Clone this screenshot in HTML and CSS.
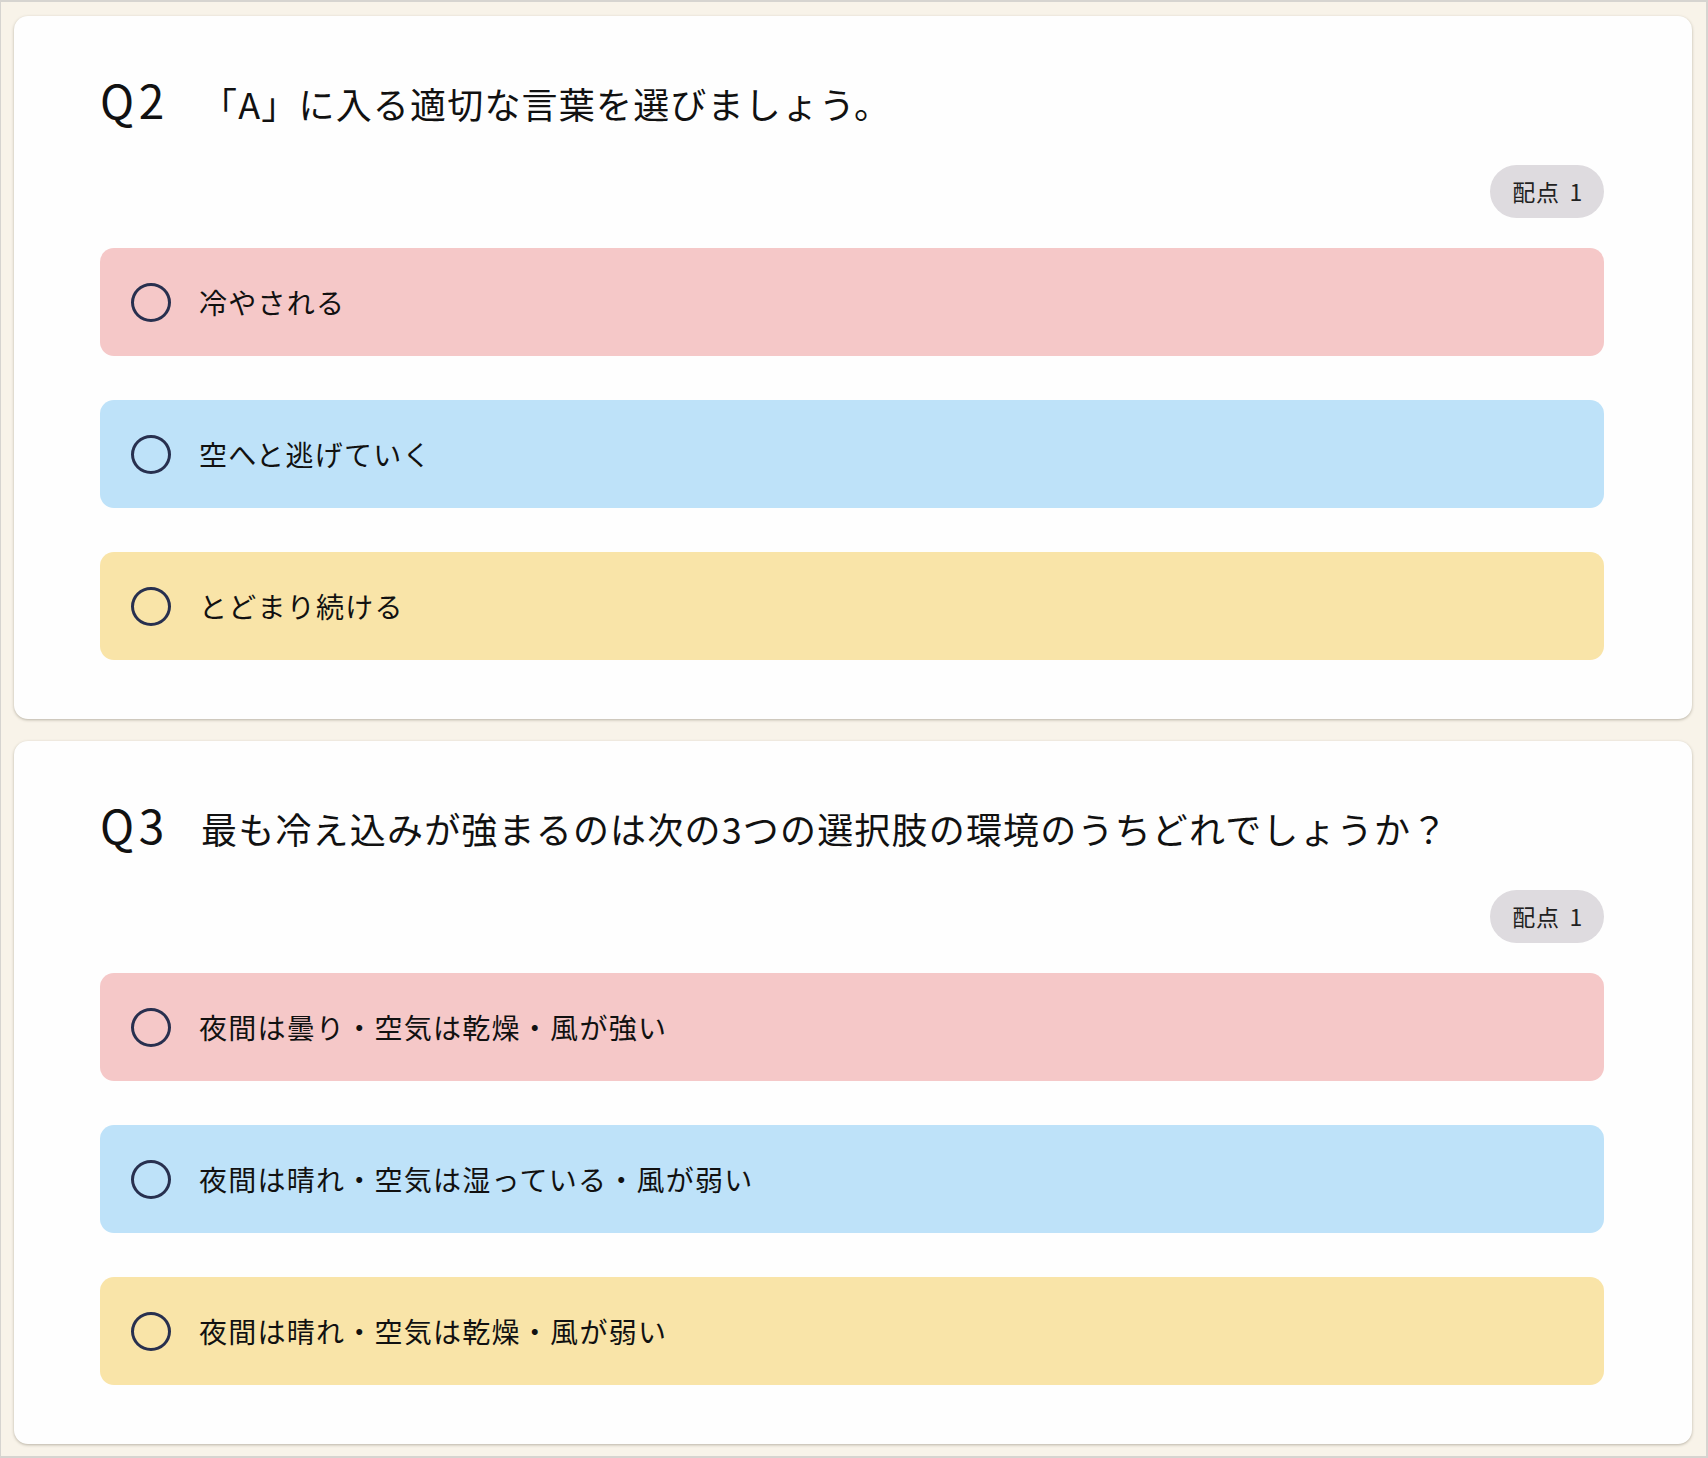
FILE: index.html
```html
<!DOCTYPE html>
<html lang="ja">
<head>
<meta charset="utf-8">
<title>Quiz</title>
<link rel="stylesheet" href="styles.css">
</head>
<body>
<div class="frame">
  <section class="card">
    <div class="title">
      <span class="qnum">Q2</span>
      <span class="qtext">「A」に入る適切な言葉を選びましょう。</span>
    </div>
    <div class="points-row"><span class="points">配点 1</span></div>
    <div class="options">
      <div class="option pink"><span class="radio"></span><span class="label">冷やされる</span></div>
      <div class="option blue"><span class="radio"></span><span class="label">空へと逃げていく</span></div>
      <div class="option yellow"><span class="radio"></span><span class="label">とどまり続ける</span></div>
    </div>
  </section>
  <section class="card">
    <div class="title">
      <span class="qnum">Q3</span>
      <span class="qtext">最も冷え込みが強まるのは次の3つの選択肢の環境のうちどれでしょうか？</span>
    </div>
    <div class="points-row"><span class="points">配点 1</span></div>
    <div class="options">
      <div class="option pink"><span class="radio"></span><span class="label">夜間は曇り・空気は乾燥・風が強い</span></div>
      <div class="option blue"><span class="radio"></span><span class="label">夜間は晴れ・空気は湿っている・風が弱い</span></div>
      <div class="option yellow"><span class="radio"></span><span class="label">夜間は晴れ・空気は乾燥・風が弱い</span></div>
    </div>
  </section>
</div>
</body>
</html>
```

FILE: styles.css
```css
* { box-sizing: border-box; }
html, body { margin: 0; padding: 0; }
body {
  font-family: "Noto Sans CJK JP", "Noto Sans", sans-serif;
  color: #111;
  background: #f8f3e9;
}
.frame {
  width: 1708px;
  height: 1458px;
  border: 2px solid #d6d4d0;
  border-left-width: 1px;
  padding: 14px 14px 0 13px;
  background: #f8f3e9;
  display: flex;
  flex-direction: column;
  gap: 22px;
}
.card {
  background: #fefefe;
  border-radius: 14px;
  box-shadow: 0 1px 3px rgba(70, 60, 40, 0.35);
  padding: 58px 88px 59px 86px;
  height: 703px;
}
.title {
  display: flex;
  align-items: baseline;
  height: 50px;
  line-height: 50px;
}
.qnum {
  flex: 0 0 101px;
  font-size: 46px;
  letter-spacing: 0.1em;
  color: #111;
}
.qtext {
  font-size: 36px;
  letter-spacing: 0.033em;
  color: #111;
}
.points-row {
  display: flex;
  justify-content: flex-end;
  margin-top: 41px;
}
.points {
  height: 53px;
  line-height: 53px;
  padding: 0 21px 0 22px;
  border-radius: 27px;
  background: #dedbdf;
  font-size: 23px;
  color: #222;
  word-spacing: 4px;
  letter-spacing: 0.03em;
}
.options {
  margin-top: 30px;
  display: flex;
  flex-direction: column;
  gap: 44px;
}
.option {
  height: 108px;
  border-radius: 14px;
  display: flex;
  align-items: center;
  padding-left: 31px;
  gap: 28px;
}
.pink { background: #f5c8c8; }
.blue { background: #bee2f9; }
.yellow { background: #f9e4a8; }
.radio {
  flex: 0 0 40px;
  width: 40px;
  height: 39px;
  border: 3px solid #28304f;
  border-radius: 50%;
}
.label {
  font-size: 28px;
  letter-spacing: 0.045em;
  color: #111;
}
```
